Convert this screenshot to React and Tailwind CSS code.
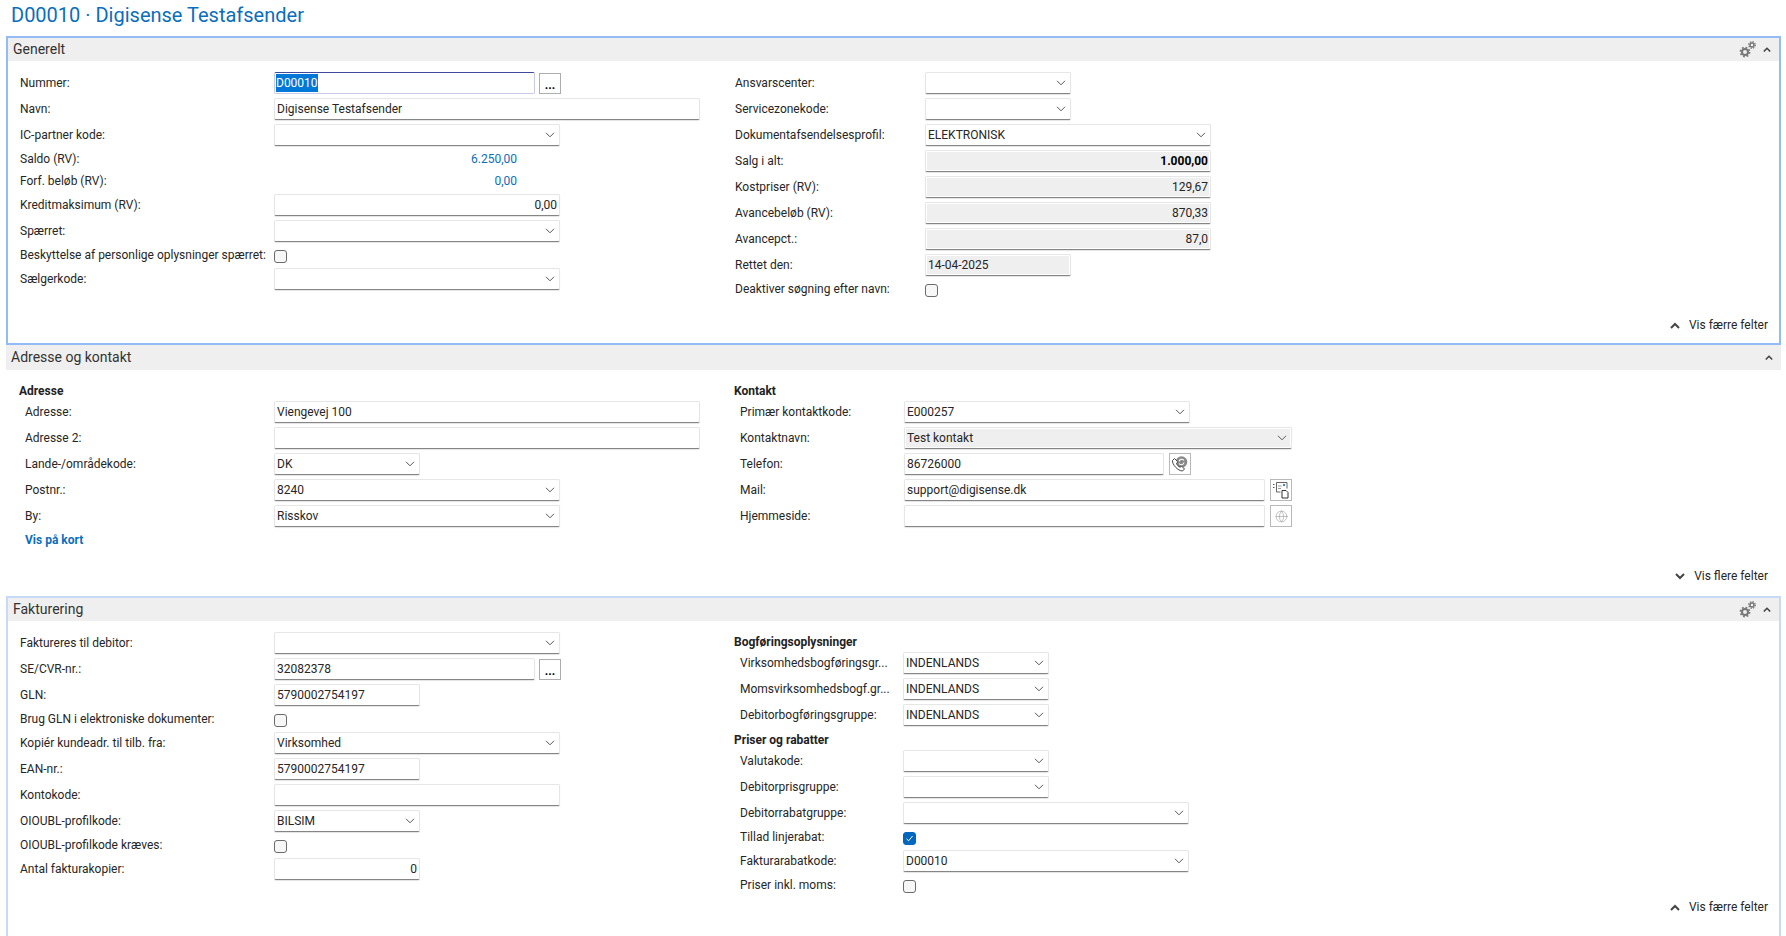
import { Globe } from 'lucide-react'

const down = <svg width="10" height="6" viewBox="0 0 10 6" fill="none" stroke="#555" strokeWidth="1"><path d="M1 .8 5 4.8 9 .8" /></svg>

function Chev({ up, w = 10 }) {
  return (
    <svg width={w} height="7" viewBox="0 0 10 7" fill="none" stroke="#444" strokeWidth="2">
      <path d={up ? 'M1 6 5 2 9 6' : 'M1 1 5 5 9 1'} />
    </svg>
  )
}

function Gears() {
  return (
    <svg width="17" height="17" viewBox="0 0 17 17" fill="none" stroke="#777">
      <circle cx="6" cy="11" r="3" strokeWidth="2" />
      <circle cx="6" cy="11" r="4.6" strokeWidth="1.6" strokeDasharray="1.8 1.8" />
      <circle cx="13" cy="4" r="2" strokeWidth="1.5" />
      <circle cx="13" cy="4" r="3.3" strokeWidth="1.3" strokeDasharray="1.4 1.2" />
    </svg>
  )
}

function Box({ w, right, grey, bold, chevron, children }) {
  return (
    <div className={`${w} h-[22px] shrink-0 border border-[#e6e6e6] border-b-[#858585] rounded-[2px] bg-white p-px shadow-[0_1px_1px_#e4e4e4]`}>
      <div className={`h-full flex items-center justify-between pl-[1px] pr-[1px] ${grey ? 'bg-[#efefef]' : ''} ${right ? 'justify-end' : ''} ${bold ? 'font-bold text-black' : ''}`}>
        <span className="whitespace-nowrap">{children}</span>
        {chevron && <span className="mr-[2px] flex">{down}</span>}
      </div>
    </div>
  )
}

function Row({ label, lw, h = 'h-[22px]', children }) {
  return (
    <div className={`flex items-center ${h}`}>
      <div className={`${lw} shrink-0 whitespace-nowrap`}>{label}</div>
      {children}
    </div>
  )
}

function Check({ on }) {
  return (
    <div className={`w-[13px] h-[13px] mt-[2px] rounded-[3px] border flex items-center justify-center ${on ? 'bg-[#0067c0] border-[#0067c0]' : 'bg-[#f7f7f7] border-[#6b6b6b]'}`}>
      {on && <svg width="9" height="9" viewBox="0 0 9 9" fill="none" stroke="#fff" strokeWidth="1"><path d="M1.5 4.8 3.6 6.8 7.6 2" /></svg>}
    </div>
  )
}

function Dots() {
  return <div className="ml-[4px] w-[22px] h-[21px] mt-px border border-[#adadad] bg-white flex items-end justify-center font-bold text-[12px] leading-[16px] text-black">...</div>
}

function IconBtn({ children }) {
  return <div className="ml-[5px] w-[22px] h-[22px] border border-[#b9b9b9] bg-white flex items-center justify-center">{children}</div>
}

function Header({ title, gears, h = 'h-[23px]' }) {
  return (
    <div className={`${h} bg-[#efefef] flex items-center justify-between pl-[5px] pr-[8px]`}>
      <span className="text-[14px] text-[#333]">{title}</span>
      <div className="flex items-center gap-[7px]">
        {gears && <Gears />}
        <Chev up w={8} />
      </div>
    </div>
  )
}

function More({ label, up, className }) {
  return (
    <div className={`flex items-center justify-end gap-[9px] h-[18px] mt-auto ${className}`}>
      <Chev up={up} />
      <span>{label}</span>
    </div>
  )
}

function Heading({ children, className = '' }) {
  return <div className={`h-[18px] flex items-center font-bold text-[#222] ${className}`}>{children}</div>
}

const L1 = 'w-[254px]'
const R1 = 'w-[190px]'
const L2 = 'w-[249px]'
const R2 = 'w-[164px]'
const R3 = 'w-[163px]'

export default function App() {
  return (
    <div className="h-[936px] overflow-hidden bg-white text-[12px] text-[#262626] font-['Roboto',sans-serif]">
      <div className="h-[36px] pl-[11px] pb-[6px] flex items-center text-[20px] text-[#0a6ebd]">D00010 · Digisense Testafsender</div>
      <div className="pl-[6px] pr-[5px]">
        {/* Generelt */}
        <section className="h-[309px] border-2 border-[#93bbf5] flex flex-col">
          <Header title="Generelt" gears />
          <div className="flex pt-[11px]">
            <div className="w-[727px] pl-[12px] flex flex-col gap-1">
              <Row label="Nummer:" lw={L1}>
                <div className="w-[261px] h-[22px] border border-[#c9c9ea] border-t-[#3f4a9e] rounded-[2px] bg-white flex items-center pl-[1px]">
                  <span className="bg-[#0078d7] text-white">D00010</span>
                </div>
                <Dots />
              </Row>
              <Row label="Navn:" lw={L1}><Box w="w-[426px]">Digisense Testafsender</Box></Row>
              <Row label="IC-partner kode:" lw={L1}><Box w="w-[286px]" chevron /></Row>
              <Row label="Saldo (RV):" lw={L1} h="h-[18px]"><div className="w-[243px] text-right text-[#0a6ebd]">6.250,00</div></Row>
              <Row label="Forf. beløb (RV):" lw={L1} h="h-[18px]"><div className="w-[243px] text-right text-[#0a6ebd]">0,00</div></Row>
              <Row label="Kreditmaksimum (RV):" lw={L1}><Box w="w-[286px]" right>0,00</Box></Row>
              <Row label="Spærret:" lw={L1}><Box w="w-[286px]" chevron /></Row>
              <Row label="Beskyttelse af personlige oplysninger spærret:" lw={L1} h="h-[18px]"><Check /></Row>
              <Row label="Sælgerkode:" lw={L1}><Box w="w-[286px]" chevron /></Row>
            </div>
            <div className="flex-1 flex flex-col gap-1">
              <Row label="Ansvarscenter:" lw={R1}><Box w="w-[146px]" chevron /></Row>
              <Row label="Servicezonekode:" lw={R1}><Box w="w-[146px]" chevron /></Row>
              <Row label="Dokumentafsendelsesprofil:" lw={R1}><Box w="w-[286px]" chevron>ELEKTRONISK</Box></Row>
              <Row label="Salg i alt:" lw={R1}><Box w="w-[286px]" grey right bold>1.000,00</Box></Row>
              <Row label="Kostpriser (RV):" lw={R1}><Box w="w-[286px]" grey right>129,67</Box></Row>
              <Row label="Avancebeløb (RV):" lw={R1}><Box w="w-[286px]" grey right>870,33</Box></Row>
              <Row label="Avancepct.:" lw={R1}><Box w="w-[286px]" grey right>87,0</Box></Row>
              <Row label="Rettet den:" lw={R1}><Box w="w-[146px]" grey>14-04-2025</Box></Row>
              <Row label="Deaktiver søgning efter navn:" lw={R1} h="h-[18px]"><Check /></Row>
            </div>
          </div>
          <More label="Vis færre felter" up className="mb-[9px] pr-[11px]" />
        </section>

        {/* Adresse og kontakt */}
        <section className="h-[251px] flex flex-col">
          <Header title="Adresse og kontakt" h="h-[25px]" />
          <div className="flex pt-[12px]">
            <div className="w-[728px] pl-[13px]">
              <Heading className="mb-px">Adresse</Heading>
              <div className="pl-[6px] flex flex-col gap-1">
                <Row label="Adresse:" lw={L2}><Box w="w-[426px]">Viengevej 100</Box></Row>
                <Row label="Adresse 2:" lw={L2}><Box w="w-[426px]" /></Row>
                <Row label="Lande-/områdekode:" lw={L2}><Box w="w-[146px]" chevron>DK</Box></Row>
                <Row label="Postnr.:" lw={L2}><Box w="w-[286px]" chevron>8240</Box></Row>
                <Row label="By:" lw={L2}><Box w="w-[286px]" chevron>Risskov</Box></Row>
                <div className="h-[18px] flex items-center font-bold text-[#0a6ebd]">Vis på kort</div>
              </div>
            </div>
            <div className="flex-1">
              <Heading className="mb-px">Kontakt</Heading>
              <div className="pl-[6px] flex flex-col gap-1">
                <Row label="Primær kontaktkode:" lw={R2}><Box w="w-[286px]" chevron>E000257</Box></Row>
                <Row label="Kontaktnavn:" lw={R2}><Box w="w-[388px]" grey chevron>Test kontakt</Box></Row>
                <Row label="Telefon:" lw={R2}>
                  <Box w="w-[260px]">86726000</Box>
                  <IconBtn>
                    <svg width="18" height="18" viewBox="0 0 18 18" fill="none">
                      <circle cx="10.5" cy="7" r="5.8" fill="#8a8a8a" />
                      <path d="M8 6.5a2.8 2.8 0 0 1 5-1M13 7.5a2.8 2.8 0 0 1-5 1" stroke="#fff" strokeWidth="1.1" />
                      <path d="M3.5 3.5 1.5 5.5c-.5 4 5.5 10.500 10 10.500l2-2-2.800-2.800-1.700 1c-1.500-.6-3-2.200-3.500-3.700l1.300-1.700z" fill="#fff" stroke="#444" strokeWidth="1" strokeLinejoin="round" />
                    </svg>
                  </IconBtn>
                </Row>
                <Row label="Mail:" lw={R2}>
                  <Box w="w-[361px]">support@digisense.dk</Box>
                  <IconBtn>
                    <svg width="18" height="18" viewBox="0 0 18 18" fill="none" stroke="#666" strokeWidth="1">
                      <path d="M1 3.500h1.500M1 6.500h1.500" stroke="#555" />
                      <path d="M4.500 1.500h10.500v6" />
                      <path d="M4.500 1.500v9.500h4" />
                      <rect x="11" y="3" width="2" height="2" fill="#3a87d6" stroke="none" />
                      <path d="M6 5h3.500M6 7.500h3" stroke="#999" />
                      <path d="M10 9.500h4l2 2v5.500h-6z" fill="#fff" stroke="#333" />
                    </svg>
                  </IconBtn>
                </Row>
                <Row label="Hjemmeside:" lw={R2}>
                  <Box w="w-[361px]" />
                  <IconBtn><Globe size={13} strokeWidth={1.2} color="#a0a0a0" /></IconBtn>
                </Row>
              </div>
            </div>
          </div>
          <More label="Vis flere felter" className="mb-[11px] pr-[13px]" />
        </section>

        {/* Fakturering */}
        <section className="h-[340px] border-2 border-b-0 border-[#c6d9f5] flex flex-col">
          <Header title="Fakturering" gears />
          <div className="flex pt-[11px]">
            <div className="w-[726px] pl-[12px] flex flex-col gap-1">
              <Row label="Faktureres til debitor:" lw={L1}><Box w="w-[286px]" chevron /></Row>
              <Row label="SE/CVR-nr.:" lw={L1}><Box w="w-[261px]">32082378</Box><Dots /></Row>
              <Row label="GLN:" lw={L1}><Box w="w-[146px]">5790002754197</Box></Row>
              <Row label="Brug GLN i elektroniske dokumenter:" lw={L1} h="h-[18px]"><Check /></Row>
              <Row label="Kopiér kundeadr. til tilb. fra:" lw={L1}><Box w="w-[286px]" chevron>Virksomhed</Box></Row>
              <Row label="EAN-nr.:" lw={L1}><Box w="w-[146px]">5790002754197</Box></Row>
              <Row label="Kontokode:" lw={L1}><Box w="w-[286px]" /></Row>
              <Row label="OIOUBL-profilkode:" lw={L1}><Box w="w-[146px]" chevron>BILSIM</Box></Row>
              <Row label="OIOUBL-profilkode kræves:" lw={L1} h="h-[18px]"><Check /></Row>
              <Row label="Antal fakturakopier:" lw={L1}><Box w="w-[146px]" right>0</Box></Row>
            </div>
            <div className="flex-1 pt-[1px]">
              <Heading className="mb-px">Bogføringsoplysninger</Heading>
              <div className="pl-[6px] flex flex-col gap-1">
                <Row label="Virksomhedsbogføringsgr..." lw={R3}><Box w="w-[146px]" chevron>INDENLANDS</Box></Row>
                <Row label="Momsvirksomhedsbogf.gr..." lw={R3}><Box w="w-[146px]" chevron>INDENLANDS</Box></Row>
                <Row label="Debitorbogføringsgruppe:" lw={R3}><Box w="w-[146px]" chevron>INDENLANDS</Box></Row>
              </div>
              <Heading className="mt-[5px] mb-px">Priser og rabatter</Heading>
              <div className="pl-[6px] flex flex-col gap-1">
                <Row label="Valutakode:" lw={R3}><Box w="w-[146px]" chevron /></Row>
                <Row label="Debitorprisgruppe:" lw={R3}><Box w="w-[146px]" chevron /></Row>
                <Row label="Debitorrabatgruppe:" lw={R3}><Box w="w-[286px]" chevron /></Row>
                <Row label="Tillad linjerabat:" lw={R3} h="h-[18px]"><Check on /></Row>
                <Row label="Fakturarabatkode:" lw={R3}><Box w="w-[286px]" chevron>D00010</Box></Row>
                <Row label="Priser inkl. moms:" lw={R3} h="h-[18px]"><Check /></Row>
              </div>
            </div>
          </div>
          <More label="Vis færre felter" up className="mb-[20px] pr-[11px]" />
        </section>
      </div>
    </div>
  )
}
